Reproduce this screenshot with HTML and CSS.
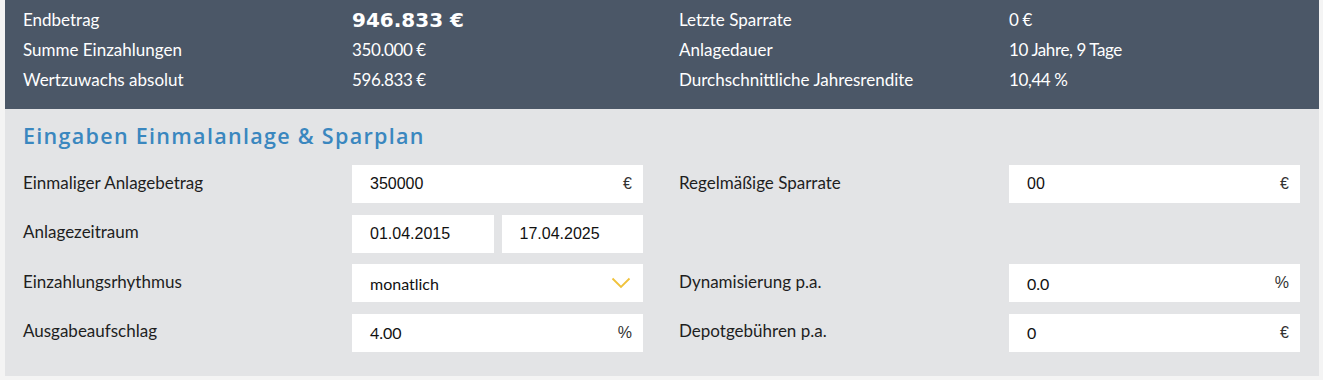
FILE: index.html
```html
<!DOCTYPE html>
<html lang="de">
<head>
<meta charset="utf-8">
<link rel="stylesheet" href="styles.css">
</head>
<body>
<div class="calc">
  <div class="summary">
    <div class="srow">
      <span class="sl">Endbetrag</span><span class="sv big">946.833 €</span>
      <span class="sl">Letzte Sparrate</span><span class="sv">0 €</span>
    </div>
    <div class="srow">
      <span class="sl">Summe Einzahlungen</span><span class="sv">350.000 €</span>
      <span class="sl">Anlagedauer</span><span class="sv">10 Jahre, 9 Tage</span>
    </div>
    <div class="srow">
      <span class="sl">Wertzuwachs absolut</span><span class="sv">596.833 €</span>
      <span class="sl">Durchschnittliche Jahresrendite</span><span class="sv">10,44 %</span>
    </div>
  </div>
  <div class="inputs">
    <h2 class="title">Eingaben Einmalanlage &amp; Sparplan</h2>
    <div class="grid">
      <span class="label">Einmaliger Anlagebetrag</span>
      <div class="field arial"><span>350000</span><span class="unit">€</span></div>
      <span class="label">Regelmäßige Sparrate</span>
      <div class="field arial"><span>00</span><span class="unit">€</span></div>

      <span class="label">Anlagezeitraum</span>
      <div class="dates">
        <div class="field arial"><span>01.04.2015</span></div>
        <div class="field arial"><span>17.04.2025</span></div>
      </div>
      <span class="label"></span>
      <span></span>

      <span class="label">Einzahlungsrhythmus</span>
      <div class="field"><span>monatlich</span>
        <svg class="chev" width="20" height="12" viewBox="0 0 20 12"><path d="M1.5 1.5 L10 10 L18.5 1.5" fill="none" stroke="#f0c23b" stroke-width="1.8"/></svg>
      </div>
      <span class="label">Dynamisierung p.a.</span>
      <div class="field"><span>0.0</span><span class="unit">%</span></div>

      <span class="label">Ausgabeaufschlag</span>
      <div class="field"><span>4.00</span><span class="unit">%</span></div>
      <span class="label">Depotgebühren p.a.</span>
      <div class="field"><span>0</span><span class="unit">€</span></div>
    </div>
  </div>
</div>
</body>
</html>
```

FILE: styles.css
```css
html, body {
  margin: 0;
  padding: 0;
  background: #f4f4f4;
}
body {
  font-family: "Lato", "Open Sans", sans-serif;
  font-size: 16px;
  color: #1e1e1e;
}
.calc {
  margin: 0 4px 0 5px;
}
.summary {
  background: #4b5767;
  color: #ffffff;
  padding: 5px 19px 14px 18px;
}
.srow {
  display: grid;
  grid-template-columns: 329px 327px 330px 291px;
  height: 30px;
  align-items: center;
}
.sl {
  font-size: 17px;
  line-height: 30px;
}
.sv {
  font-size: 17px;
  letter-spacing: -0.4px;
  line-height: 30px;
}
.sv.big {
  font-family: "DejaVu Sans", sans-serif;
  font-size: 20px;
  font-weight: 700;
  letter-spacing: 0;
}
.inputs {
  background: #e3e4e6;
  padding: 13px 19px 24px 18px;
}
.title {
  margin: 0 0 15px 0;
  font-family: "Open Sans", sans-serif;
  font-weight: 600;
  font-size: 21.5px;
  letter-spacing: 1.3px;
  line-height: 28px;
  color: #3a87bf;
}
.grid {
  display: grid;
  grid-template-columns: 329px 327px 330px 291px;
  grid-auto-rows: 38px;
  row-gap: 11.5px;
  align-items: center;
}
.label {
  font-size: 17px;
  padding-bottom: 4px;
}
.field {
  width: 291px;
  height: 38px;
  box-sizing: border-box;
  background: #ffffff;
  display: flex;
  align-items: center;
  justify-content: space-between;
  padding: 0 11px 0 18px;
  color: #111;
}
.arial {
  font-family: "Liberation Sans", Arial, sans-serif;
  font-size: 16px;
}
.unit {
  font-family: "Liberation Sans", Arial, sans-serif;
  font-size: 16px;
  color: #333;
}
.dates {
  display: flex;
  gap: 8px;
  width: 291px;
}
.dates .field {
  width: auto;
  flex: 1;
}
.chev {
  margin-right: 1px;
}
```
